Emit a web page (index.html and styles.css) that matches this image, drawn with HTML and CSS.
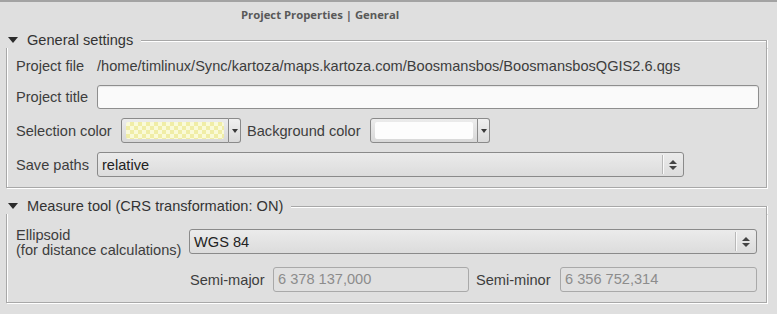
FILE: index.html
```html
<!DOCTYPE html>
<html lang="en">
<head>
    <meta charset="UTF-8">
    <title>Project Properties | General</title>
    <link rel="stylesheet" href="styles.css">
</head>
<body>
    <div class="page-title">Project Properties | General</div>

    <div class="group">
        <div class="group-head">
            <span class="arrow"></span>
            <span class="group-name">General settings</span>
            <span class="group-line"></span>
        </div>
        <div class="group-body general">
            <div class="label">Project file</div>
            <div class="value">/home/timlinux/Sync/kartoza/maps.kartoza.com/Boosmansbos/BoosmansbosQGIS2.6.qgs</div>

            <div class="label">Project title</div>
            <div class="field"></div>

            <div class="color-row">
                <span class="label sel-label">Selection color</span>
                <span class="color-btn"><span class="swatch checker"></span></span>
                <span class="drop-btn"><span class="drop-tri"></span></span>
                <span class="label bg-label">Background color</span>
                <span class="color-btn"><span class="swatch"></span></span>
                <span class="drop-btn"><span class="drop-tri"></span></span>
            </div>

            <div class="label">Save paths</div>
            <div class="combo short">
                <span class="combo-text">relative</span>
                <span class="combo-sep"></span>
                <span class="spin"><span class="up"></span><span class="down"></span></span>
            </div>
        </div>
    </div>

    <div class="group second">
        <div class="group-head">
            <span class="arrow"></span>
            <span class="group-name">Measure tool (CRS transformation: ON)</span>
            <span class="group-line"></span>
        </div>
        <div class="group-body measure">
            <div class="label two-line">Ellipsoid<br>(for distance calculations)</div>
            <div class="combo">
                <span class="combo-text">WGS 84</span>
                <span class="combo-sep"></span>
                <span class="spin"><span class="up"></span><span class="down"></span></span>
            </div>

            <div></div>
            <div class="axis-row">
                <span class="label">Semi-major</span>
                <span class="field disabled">6 378 137,000</span>
                <span class="label">Semi-minor</span>
                <span class="field disabled">6 356 752,314</span>
            </div>
        </div>
    </div>
</body>
</html>
```

FILE: styles.css
```css
* {
    margin: 0;
    padding: 0;
    box-sizing: border-box;
}

body {
    font-family: 'Liberation Sans', Arial, sans-serif;
    font-size: 14.6px;
    color: #3d3d3d;
    background: #dfdfdf;
    border-top: 2px solid #a3a3a3;
    width: 777px;
    height: 314px;
    overflow: hidden;
}

.page-title {
    font-family: 'Open Sans', sans-serif;
    font-weight: bold;
    font-size: 11.3px;
    color: #595959;
    height: 28px;
    line-height: 25px;
    padding-left: 241px;
}

/* group boxes */
.group {
    margin: 2px 10px 0 6px;
}

.group.second {
    margin-top: 10px;
}

.group-head {
    display: flex;
    height: 16px;
    align-items: center;
}

.arrow {
    width: 0;
    height: 0;
    margin: 0 9px 0 2px;
    border-left: 5px solid transparent;
    border-right: 5px solid transparent;
    border-top: 6px solid #2b2b2b;
}

.group-name {
    font-size: 14.6px;
    color: #333;
}

.group-line {
    flex: 1;
    align-self: stretch;
    margin: 8px 0 0 8px;
    border-top: 1px solid #a8a8a8;
    border-right: 1px solid #a8a8a8;
    box-shadow: inset 0 1px 0 #fff, 1px 0 0 #fff;
}

.group-body {
    border: 1px solid #a8a8a8;
    border-top: none;
    box-shadow: inset 1px 0 0 #fff, 1px 1px 0 #fff;
    padding: 7px 7px 10px 9px;
}

.general {
    display: grid;
    grid-template-columns: 81px 1fr;
    grid-template-rows: 21px 24px 25px 25px;
    row-gap: 9px;
    align-items: center;
}

.measure {
    display: grid;
    grid-template-columns: 173px 1fr;
    grid-template-rows: 25px 25px;
    row-gap: 13px;
    align-items: center;
    padding-top: 15px;
    padding-right: 9px;
}

.label {
    white-space: nowrap;
}

.two-line {
    line-height: 15px;
    margin-top: 3px;
}

.value {
    white-space: nowrap;
}

/* inputs */
.field {
    height: 24px;
    background: #fafafa;
    border: 1px solid #8e8e8e;
    border-radius: 3px;
    box-shadow: inset 0 1px 1px rgba(0, 0, 0, 0.08);
}

.field.disabled {
    display: block;
    height: 25px;
    background: #e0e0e0;
    border-color: #a9a9a9;
    box-shadow: none;
    color: #8c8c8c;
    padding-left: 4px;
    line-height: 23px;
}

.color-row {
    grid-column: 1 / 3;
    display: flex;
    align-items: center;
    height: 25px;
}

.sel-label {
    width: 105px;
}

.bg-label {
    width: 123px;
    margin-left: 6px;
}

.color-btn {
    width: 108px;
    height: 25px;
    border: 1px solid #8a8a8a;
    border-radius: 3px 0 0 3px;
    background: linear-gradient(#ececec, #d8d8d8);
    padding: 3px 4px;
}

.swatch {
    display: block;
    width: 100%;
    height: 100%;
    background: #fdfdfd;
    border-radius: 2px;
}

.swatch.checker {
    background-color: #fafad8;
    background-image:
        linear-gradient(45deg, #f0eda6 25%, transparent 25%, transparent 75%, #f0eda6 75%),
        linear-gradient(45deg, #f0eda6 25%, transparent 25%, transparent 75%, #f0eda6 75%);
    background-size: 8px 8px;
    background-position: 0 0, 4px 4px;
}

.drop-btn {
    width: 12px;
    height: 25px;
    border: 1px solid #8a8a8a;
    border-left: none;
    border-radius: 0 3px 3px 0;
    background: linear-gradient(#f0f0f0, #dadada);
    display: flex;
    align-items: center;
    justify-content: center;
}

.drop-tri {
    width: 0;
    height: 0;
    border-left: 3px solid transparent;
    border-right: 3px solid transparent;
    border-top: 4px solid #3a3a3a;
}

/* combo boxes */
.combo {
    height: 25px;
    display: flex;
    align-items: center;
    border: 1px solid #8a8a8a;
    border-radius: 3px;
    background: linear-gradient(#ebebeb, #dcdcdc);
    color: #222;
}

.combo.short {
    width: 587px;
}

.combo-text {
    flex: 1;
    padding-left: 4px;
}

.combo-sep {
    width: 1px;
    height: 19px;
    background: #b8b8b8;
    box-shadow: 1px 0 0 #fafafa;
}

.spin {
    width: 20px;
    display: flex;
    flex-direction: column;
    align-items: center;
    gap: 2px;
}

.up,
.down {
    width: 0;
    height: 0;
    border-left: 4px solid transparent;
    border-right: 4px solid transparent;
}

.up {
    border-bottom: 4px solid #444;
}

.down {
    border-top: 4px solid #444;
}

.axis-row {
    display: grid;
    grid-template-columns: 84px 196px 7px 84px 1fr;
    align-items: center;
}

.axis-row .label:first-child {
    grid-column: 1;
    padding-left: 1px;
}

.axis-row .field:nth-child(2) {
    grid-column: 2;
}

.axis-row .label:nth-child(3) {
    grid-column: 4;
}

.axis-row .field:nth-child(4) {
    grid-column: 5;
}
```
